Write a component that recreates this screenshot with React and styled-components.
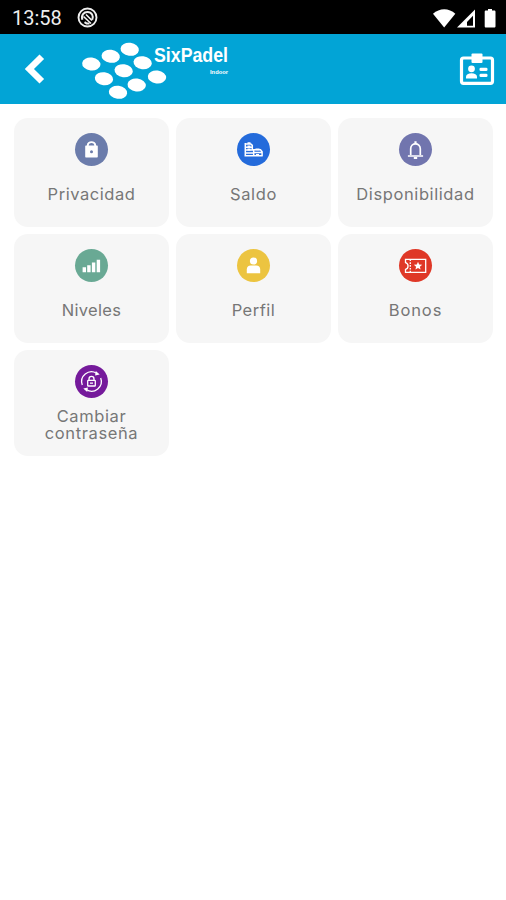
import React from 'react';
import styled, { createGlobalStyle } from 'styled-components';

const GlobalStyle = createGlobalStyle`
  * {
    box-sizing: border-box;
  }
  body {
    margin: 0;
    background: #fff;
    font-family: Inter, 'Liberation Sans', sans-serif;
  }
`;

const Screen = styled.div`
  min-height: 900px;
  background: #fff;
`;

const StatusBar = styled.div`
  display: flex;
  align-items: center;
  justify-content: space-between;
  height: 34px;
  padding: 1px 9px 0 12px;
  background: #000;
`;

const StatusGroup = styled.div`
  display: flex;
  align-items: center;
  gap: 15px;
`;

const Clock = styled.span`
  color: #eee;
  font-family: Roboto, sans-serif;
  font-size: 20px;
  line-height: 34px;
`;

const Header = styled.header`
  display: flex;
  align-items: center;
  height: 70px;
  padding: 0 11px 0 24px;
  background: #02a4d6;
`;

const BackButton = styled.button`
  display: flex;
  padding: 0;
  border: 0;
  background: none;
`;

const Logo = styled.svg`
  margin: 0 auto 0 32px;
  overflow: visible;
`;

const Grid = styled.main`
  display: grid;
  grid-template-columns: repeat(3, 155px);
  grid-template-rows: 109px 109px 106px;
  gap: 7px;
  padding: 14px;
`;

const Card = styled.div`
  display: flex;
  flex-direction: column;
  align-items: center;
  padding-top: 15px;
  border-radius: 14px;
  background: #f6f6f6;
`;

const Badge = styled.div`
  display: flex;
  flex-shrink: 0;
  width: 33px;
  height: 33px;
  border-radius: 50%;
  background: ${({ $color }) => $color};
`;

const Label = styled.span`
  margin-top: ${({ $double }) => ($double ? 10 : 20)}px;
  color: #777;
  font-size: 16.5px;
  font-weight: 400;
  line-height: 17px;
  letter-spacing: ${({ $spacing }) => $spacing}px;
  text-align: center;
  white-space: pre-line;
`;

const icons = {
  lock: (
    <path
      fill="#fff"
      fillRule="evenodd"
      d="M10.200 13.500c0-.6.400-1 1-1h.6c0-5.600 9.400-5.600 9.400 0h.6c.6 0 1 .4 1 1v10c0 .7-.4 1.100-1 1.100H11.200c-.6 0-1-.4-1-1.100zm3.500-1h5.600c0-3.300-5.600-3.300-5.600 0zm2.800 4.800a1.500 1.500 0 1 0 0 3 1.500 1.500 0 0 0 0-3z"
    />
  ),
  money: (
    <g fill="none" stroke="#fff" strokeWidth="1.5">
      <path d="M8.300 10v13M7.500 22.700h18.200M8.300 11h5.500l1.500 1.400v5.200M8.300 14.200h7M8.300 17.100h8M8.300 20h8M16.700 22.800v-6h6.800l1.600 2v4.200M16.700 19.500H25" />
      <path d="M10.500 10.200h3M10.500 13.400h3M10.500 16.500h3M18.500 16.300h4M19 22h3" strokeWidth="1.800" />
    </g>
  ),
  bell: (
    <g fill="none" stroke="#fff" strokeWidth="1.700">
      <path d="M11.700 22v-6.200c0-6.600 9.600-6.600 9.600 0V22M8.900 23h15.200" />
      <path d="M16.500 8.300v2.700M14.800 25h3.400" strokeWidth="2.200" />
    </g>
  ),
  levels: (
    <path
      fill="#fff"
      d="M7.600 18.300h3.400v5H7.600zM12.200 16.200h3.400v7.100h-3.400zM16.900 13.400h3.400v9.900h-3.400zM21.700 10.800h3.400v12.500h-3.400z"
    />
  ),
  user: (
    <g fill="#fff">
      <circle cx="16.500" cy="12" r="3.600" />
      <path d="M9.800 24.300v-3.900c0-2.600 1.500-3.900 4-3.900h5.400c2.500 0 4 1.300 4 3.900v3.900z" />
    </g>
  ),
  ticket: (
    <g fill="none" stroke="#fff" strokeWidth="1.300">
      <path d="M6.500 10.400h20.200v13H6.500v-3c3.400-.8 3.400-5.900 0-6.800z" />
      <path d="M11.300 10.500v13" strokeDasharray="1.600 1.200" />
      <path
        fill="#fff"
        stroke="none"
        d="m19 12.700 1.200 2.700 3 .3-2.300 2 .7 2.900-2.600-1.500-2.600 1.500.7-2.900-2.300-2 3-.3z"
      />
    </g>
  ),
  reset: (
    <g fill="none" stroke="#fff" strokeWidth="1.300">
      <path d="M7.300 20A9.800 9.800 0 0 1 21.500 8.200M25.700 13A9.800 9.800 0 0 1 11.500 24.800" />
      <path fill="#fff" stroke="none" d="m20.800 5.900 3.900 3.600-4.600 1zM12.200 27.100l-3.900-3.600 4.600-1z" />
      <rect x="12.700" y="15.400" width="7.600" height="5.600" rx=".6" />
      <path d="M14 15v-1c0-3.500 5-3.500 5 0v1M15 18.200h3" />
    </g>
  ),
};

const options = [
  { label: 'Privacidad', icon: 'lock', color: '#6b7cab', spacing: 0.55 },
  { label: 'Saldo', icon: 'money', color: '#246bdb', spacing: 0.6 },
  { label: 'Disponibilidad', icon: 'bell', color: '#7175ae', spacing: 0.6 },
  { label: 'Niveles', icon: 'levels', color: '#69a994', spacing: 0.3 },
  { label: 'Perfil', icon: 'user', color: '#ecc440', spacing: 0.5 },
  { label: 'Bonos', icon: 'ticket', color: '#df3827', spacing: 0.9 },
  { label: 'Cambiar\ncontraseña', icon: 'reset', color: '#751a9b', spacing: 0.6 },
];

const dots = [
  [91.3, 64],
  [110.7, 56.3],
  [129.7, 49.3],
  [142.7, 62.7],
  [123.7, 70.7],
  [104, 78.7],
  [118, 92.3],
  [136.7, 85],
  [157, 77],
];

const Option = ({ label, icon, color, spacing }) => (
  <Card>
    <Badge $color={color}>
      <svg width="33" height="33" viewBox="0 0 33 33">
        {icons[icon]}
      </svg>
    </Badge>
    <Label $spacing={spacing} $double={label.includes('\n')}>
      {label}
    </Label>
  </Card>
);

const App = () => {
  return (
    <Screen>
      <GlobalStyle />
      <StatusBar>
        <StatusGroup>
          <Clock>13:58</Clock>
          <svg width="21" height="21" viewBox="0 0 21 21" fill="none" stroke="#eee">
            <circle cx="10.500" cy="10.500" r="9" strokeWidth="1.900" />
            <path d="M5.400 12.800C3.800 7.800 7 5 10.500 5c4.200 0 6.500 4 4.700 7.800M7.500 15.200l2 1.200h3" strokeWidth="2" />
            <path d="m6.500 9.500 7.500 7M9 7.500l6 6" strokeWidth="1.700" />
          </svg>
        </StatusGroup>
        <svg width="65" height="22" viewBox="432 6 65 22" fill="#fff">
          <path d="M433 12.800c6.500-6 16-6 22.300 0L444.200 26.500z" />
          <path fillRule="evenodd" d="M475 8.500v18h-18zm-2 6.300-6 6.200v3.700h6z" />
          <path d="M486 9.500h2V8h4v1.500h2.200c.8 0 1.300.5 1.300 1.300v14.500c0 .8-.5 1.300-1.300 1.300H486c-.8 0-1.300-.5-1.300-1.300V10.800c0-.8.5-1.300 1.300-1.300z" />
        </svg>
      </StatusBar>
      <Header>
        <BackButton aria-label="Volver">
          <svg width="22" height="30" viewBox="0 0 22 30" fill="none" stroke="#fff" strokeWidth="6.500">
            <path d="M17.800 2.700 5.400 15l12.400 12.300" />
          </svg>
        </BackButton>
        <Logo width="155" height="68" viewBox="78 35 155 68" fill="#fff">
          {dots.map(([x, y]) => (
            <ellipse key={x} cx={x} cy={y} rx="9.200" ry="6.500" transform={`rotate(7 ${x} ${y})`} />
          ))}
          <text
            x="154"
            y="62.200"
            fontFamily="Liberation Sans, sans-serif"
            fontWeight="700"
            fontSize="19.500"
            textLength="74"
            lengthAdjust="spacingAndGlyphs"
          >
            SixPadel
          </text>
          <text
            x="210"
            y="74"
            fontFamily="Liberation Sans, sans-serif"
            fontWeight="700"
            fontSize="6"
            textLength="18"
            lengthAdjust="spacingAndGlyphs"
          >
            Indoor
          </text>
        </Logo>
        <svg width="36" height="34" viewBox="459 52 36 34" fill="#fff">
          <rect x="461.500" y="58" width="31" height="25.300" rx="2" fill="none" stroke="#fff" strokeWidth="3.200" />
          <rect x="471.500" y="53.500" width="11" height="9.500" rx="1" />
          <circle cx="471.500" cy="68.800" r="3.400" />
          <path d="M466 78.500v-1.700c0-2.300 2.300-3.600 5.500-3.600s5.500 1.300 5.500 3.600v1.700z" />
          <rect x="479.500" y="67.800" width="8" height="3.200" rx="1.300" />
          <rect x="479.500" y="73.800" width="8" height="3.200" rx="1.300" />
        </svg>
      </Header>
      <Grid>
        {options.map((option) => (
          <Option key={option.label} {...option} />
        ))}
      </Grid>
    </Screen>
  );
};

export default App;
